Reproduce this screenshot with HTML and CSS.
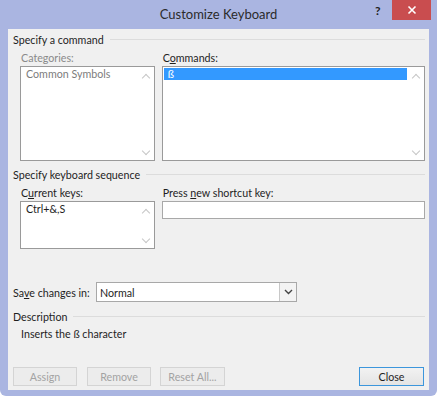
FILE: index.html
```html
<!DOCTYPE html>
<html>
<head>
<meta charset="utf-8">
<link rel="stylesheet" href="styles.css">
</head>
<body>
<div class="window">
  <div class="titlebar">
    <div class="title">Customize Keyboard</div>
    <div class="help">?</div>
    <div class="close">
      <svg width="10" height="10" viewBox="0 0 10 10"><path d="M1.5 1.5 L8.5 8.5 M8.5 1.5 L1.5 8.5" stroke="#fff" stroke-width="1.6"/></svg>
    </div>
  </div>
  <div class="client">
    <div class="group"><span>Specify a command</span><div class="rule"></div></div>
    <div class="cols cmd">
      <div class="col left">
        <div class="label disabled">Categories:</div>
        <div class="listbox tall">
          <div class="items"><div class="item gray">Common Symbols</div></div>
          <div class="scroll"><span class="up"></span><span class="down"></span></div>
        </div>
      </div>
      <div class="col right">
        <div class="label">C<u>o</u>mmands:</div>
        <div class="listbox tall">
          <div class="items"><div class="item sel">ß</div></div>
          <div class="scroll"><span class="up"></span><span class="down"></span></div>
        </div>
      </div>
    </div>
    <div class="group seq"><span>Specify keyboard sequence</span><div class="rule"></div></div>
    <div class="cols keys">
      <div class="col left">
        <div class="label">C<u>u</u>rrent keys:</div>
        <div class="listbox short">
          <div class="items"><div class="item">Ctrl+&amp;,S</div></div>
          <div class="scroll"><span class="up"></span><span class="down"></span></div>
        </div>
      </div>
      <div class="col right">
        <div class="label">Press <u>n</u>ew shortcut key:</div>
        <div class="textbox"></div>
      </div>
    </div>
    <div class="saverow">
      <span class="savelabel">Sa<u>v</u>e changes in:</span>
      <div class="select"><span class="val">Normal</span><span class="drop"><svg width="9" height="6" viewBox="0 0 9 6"><path d="M1 1 L4.5 4.5 L8 1" fill="none" stroke="#444" stroke-width="1.4"/></svg></span></div>
    </div>
    <div class="group desc"><span>Description</span><div class="rule"></div></div>
    <div class="desctext">Inserts the ß character</div>
    <div class="buttons">
      <div class="btn dis">Assign</div>
      <div class="btn dis">Remove</div>
      <div class="btn dis">Reset All...</div>
      <div class="spacer"></div>
      <div class="btn def">Close</div>
    </div>
  </div>
</div>
</body>
</html>
```

FILE: styles.css
```css
html, body { margin: 0; padding: 0; }
body {
  width: 437px; height: 400px; overflow: hidden;
  background: #ffffff;
  font-family: "Lato", "Noto Sans", sans-serif;
  font-size: 10.7px; color: #1e1e1e;
}
.window {
  width: 437px; height: 396px;
  background: #aab5e1;
  border-radius: 0 0 6px 6px;
  display: flex; flex-direction: column;
}
.titlebar {
  height: 29px; position: relative;
  display: flex; align-items: center; justify-content: center;
}
.title { font-size: 13px; color: #2b2b2b; margin-top: -2px; }
.help {
  position: absolute; left: 375px; top: 3px;
  font-size: 12px; font-weight: bold; color: #222;
}
.close {
  position: absolute; left: 392px; top: 0; width: 39px; height: 20px;
  background: #c94d4f;
  display: flex; align-items: center; justify-content: center;
}
.client {
  margin: 0 8px; height: 361px;
  background: #f0f0f0;
  padding: 3px 4px 0 5px;
  box-sizing: border-box;
  display: flex; flex-direction: column;
}
.group { display: flex; align-items: center; height: 15px; }
.group span { white-space: nowrap; padding-right: 6px; }
.rule { flex: 1; height: 1px; background: #dcdcdc; }
.cols { display: flex; gap: 7px; padding-left: 7px; }
.col { display: flex; flex-direction: column; }
.left { width: 135px; }
.right { width: 264px; }
.label { height: 13px; line-height: 13px; margin: 4px 0 2px 1px; white-space: nowrap; }
.disabled { color: #8a8a8a; }
u { text-decoration: underline; text-underline-offset: 1px; }
.listbox {
  border: 1px solid #9a9a9a; background: #fff;
  display: flex; box-sizing: border-box;
}
.tall { height: 95px; }
.short { height: 48px; }
.items { flex: 1; padding: 1px; }
.item { height: 12px; line-height: 12px; padding-left: 4px; white-space: nowrap; }
.gray { color: #7c7c7c; }
.sel { background: #3399ff; color: #fff; }
.scroll {
  width: 16px; display: flex; flex-direction: column; justify-content: space-between;
  align-items: center; padding: 6px 0 4px;
}
.up, .down { width: 5px; height: 5px; border-left: 1.3px solid #c6c6c6; border-top: 1.3px solid #c6c6c6; }
.up { transform: rotate(45deg); margin-top: 2px; }
.down { transform: rotate(225deg); margin-bottom: 2px; }
.seq { margin-top: 6px; }
.textbox { height: 18px; border: 1px solid #a8a8a8; background: #fff; box-sizing: border-box; }
.saverow { display: flex; align-items: center; margin-top: 33px; height: 20px; }
.savelabel { width: 83px; white-space: nowrap; }
.select {
  width: 201px; height: 20px; box-sizing: border-box;
  border: 1px solid #a8a8a8; background: #fff;
  display: flex; align-items: center;
}
.val { flex: 1; padding-left: 3px; }
.drop {
  width: 16px; height: 18px; border-left: 1px solid #c8c8c8;
  display: flex; align-items: center; justify-content: center;
  background: #f3f3f3;
}
.desc { margin-top: 7px; }
.desctext { padding-left: 8px; margin-top: 3px; height: 14px; line-height: 14px; }
.buttons { display: flex; gap: 10px; margin-top: 26px; padding-right: 1px; }
.spacer { flex: 1; }
.btn {
  width: 64px; height: 19px; box-sizing: border-box;
  border: 1px solid #d4d4d4; background: #ececec;
  display: flex; align-items: center; justify-content: center;
  white-space: nowrap;
}
.dis { color: #a3a3a3; }
.btn:nth-child(3) { width: 65px; margin-left: -1px; }
.def {
  width: 65px;
  border: 1px solid #3c96dc;
  background: linear-gradient(#f2f2f2, #e4e4e4);
  color: #1e1e1e;
}
```
